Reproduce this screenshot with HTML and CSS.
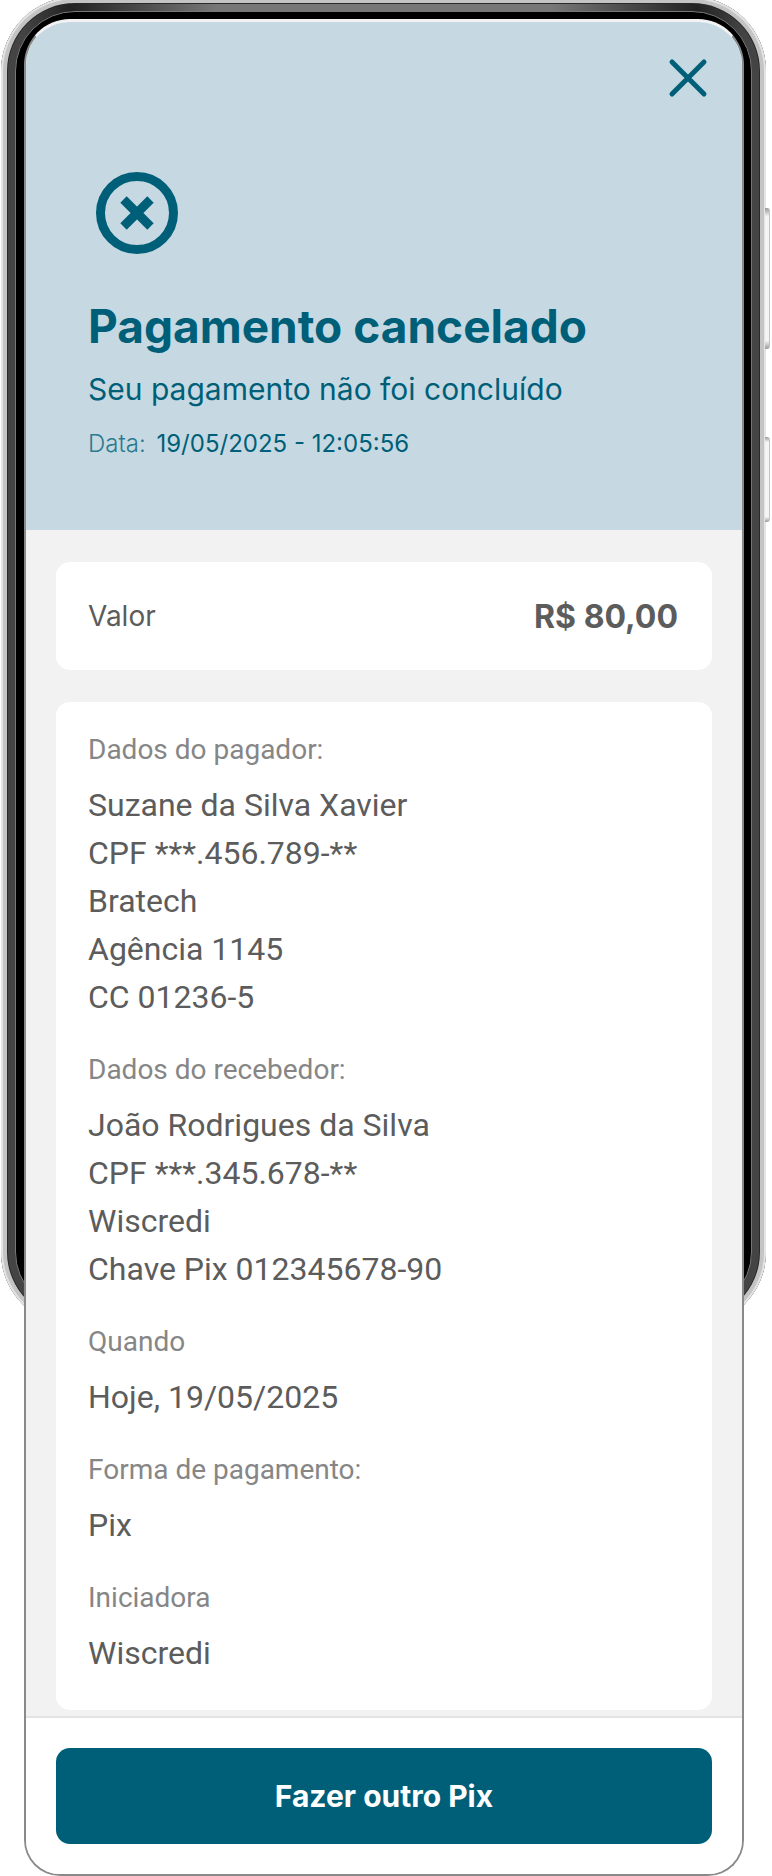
FILE: index.html
```html
<!DOCTYPE html>
<html lang="pt-BR">
<head>
    <title>Pagamento cancelado</title>
    <meta charset="utf-8">
    <link rel="stylesheet" href="styles.css">
</head>
<body>
<!-- device frame, sits behind the screen -->
<div class="phone"></div>
<div class="side-btn side-btn-power"></div>
<div class="side-btn side-btn-volume"></div>

<div class="screen">
    <header class="hero">
        <div class="hero-top">
            <svg class="close-icon" width="44" height="44" viewBox="0 0 44 44">
                <path d="M6 6 L38 38 M38 6 L6 38" fill="none" stroke="#005f78" stroke-width="5" stroke-linecap="round"/>
            </svg>
        </div>
        <svg class="status-icon" width="84" height="84" viewBox="0 0 84 84">
            <circle cx="42" cy="42" r="36.5" fill="none" stroke="#005f78" stroke-width="9"/>
            <path d="M28.5 28.5 L55.5 55.5 M55.5 28.5 L28.5 55.5" fill="none" stroke="#005f78" stroke-width="9"/>
        </svg>
        <h1>Pagamento cancelado</h1>
        <p class="subtitle">Seu pagamento não foi concluído</p>
        <p class="date"><span class="date-label">Data:</span> 19/05/2025 - 12:05:56</p>
    </header>

    <main class="content">
        <section class="card value-card">
            <span class="value-label">Valor</span>
            <strong class="value-amount">R$ 80,00</strong>
        </section>

        <section class="card details-card">
            <div class="group">
                <h2>Dados do pagador:</h2>
                <p>Suzane da Silva Xavier</p>
                <p>CPF ***.456.789-**</p>
                <p>Bratech</p>
                <p>Agência 1145</p>
                <p>CC 01236-5</p>
            </div>
            <div class="group">
                <h2>Dados do recebedor:</h2>
                <p>João Rodrigues da Silva</p>
                <p>CPF ***.345.678-**</p>
                <p>Wiscredi</p>
                <p>Chave Pix 012345678-90</p>
            </div>
            <div class="group">
                <h2>Quando</h2>
                <p>Hoje, 19/05/2025</p>
            </div>
            <div class="group">
                <h2>Forma de pagamento:</h2>
                <p>Pix</p>
            </div>
            <div class="group">
                <h2>Iniciadora</h2>
                <p>Wiscredi</p>
            </div>
        </section>
    </main>

    <footer class="footer">
        <button class="primary-btn" type="button">Fazer outro Pix</button>
    </footer>
</div>
</body>
</html>
```

FILE: styles.css
```css
html, body {
    margin: 0;
    height: 1876px;
    overflow: hidden;
    background: #fff;
    font-family: Inter, "Liberation Sans", sans-serif;
}

.phone {
    position: absolute;
    left: 1px;
    top: -3px;
    width: 765px;
    height: 1329px;
    border-radius: 74px;
    background: linear-gradient(90deg, #444 0, #444 3%, #222 9%, #777 28%, #777 72%, #222 91%, #444 97%, #444 100%);
    box-shadow: inset 0 0 0 2px #e4e4e4,
                inset 0 0 0 6px #c4c4c4,
                inset 0 0 0 7px #2a2a2a;
}

.phone::before {
    content: "";
    position: absolute;
    top: 14px;
    right: 14px;
    bottom: 14px;
    left: 14px;
    border: 1px solid #777;
    border-radius: 60px;
    background: #000;
}

.side-btn {
    position: absolute;
    left: 765px;
    width: 4px;
    background: linear-gradient(#9a9a9a, #f4f4f4 6%, #f4f4f4 94%, #9a9a9a);
    border-right: 1px solid #c4c4c4;
    border-radius: 0 3px 3px 0;
}

.side-btn-power {
    top: 208px;
    height: 141px;
}

.side-btn-volume {
    top: 437px;
    height: 85px;
}

.screen {
    position: relative;
    box-sizing: border-box;
    display: flex;
    flex-direction: column;
    width: 720px;
    height: 1857px;
    margin: 19px 0 0 24px;
    overflow: hidden;
    background: #fff;
    border: 2px solid #8a8a8a;
    border-top: 3px solid #f2f2f2;
    border-radius: 46px 46px 36px 36px;
}

.hero {
    height: 508px;
    box-sizing: border-box;
    padding: 34px 32px 0 62px;
    background: #c6d9e2;
    color: #005f78;
}

.hero-top {
    display: flex;
    justify-content: flex-end;
}

.status-icon {
    display: block;
    margin: 71px 0 0 7px;
}

.hero h1 {
    margin: 43px 0 0;
    font-size: 46px;
    line-height: 56px;
    font-weight: 700;
}

.subtitle {
    margin: 15px 0 0;
    font-size: 30px;
    line-height: 40px;
}

.date {
    margin: 20px 0 0;
    font-size: 24px;
    line-height: 30px;
}

.date-label {
    font-weight: 300;
    color: #2a7a90;
    margin-right: 4px;
}

.content {
    flex: 1;
    padding: 32px 30px 0;
    background: #f2f2f2;
}

.card {
    background: #fff;
    border-radius: 14px;
}

.value-card {
    display: flex;
    align-items: center;
    justify-content: space-between;
    height: 108px;
    box-sizing: border-box;
    padding: 0 34px 0 32px;
}

.value-label {
    font-size: 28px;
    color: #5c5c5c;
}

.value-amount {
    font-size: 32px;
    font-weight: 700;
    color: #5c5c5c;
}

.details-card {
    box-sizing: border-box;
    height: 1008px;
    margin-top: 32px;
    padding: 32px;
    font-family: Roboto, "Liberation Sans", sans-serif;
}

.group {
    margin-bottom: 33px;
}

.group h2 {
    margin: 0 0 15px;
    font-size: 28px;
    line-height: 32px;
    font-weight: 400;
    color: #868686;
}

.group p {
    margin: 0;
    font-size: 32px;
    line-height: 48px;
    color: #5c5c5c;
}

.footer {
    box-sizing: border-box;
    height: 158px;
    padding: 30px 30px 0;
    background: #fff;
    border-top: 2px solid #e3e3e3;
}

.primary-btn {
    display: block;
    width: 100%;
    height: 96px;
    border: 0;
    border-radius: 14px;
    background: #005f78;
    color: #fff;
    font-family: Inter, "Liberation Sans", sans-serif;
    font-size: 30px;
    font-weight: 700;
}
```
